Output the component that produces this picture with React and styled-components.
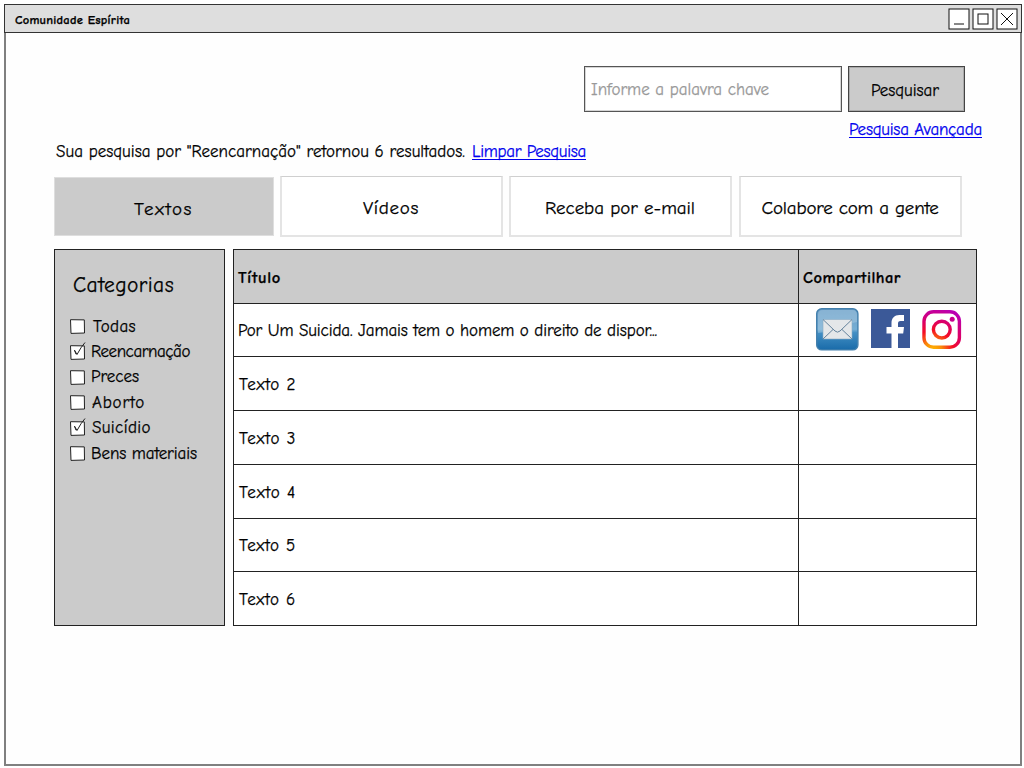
import React, { useLayoutEffect, useRef, useState } from "react";
import styled, { createGlobalStyle, css } from "styled-components";

const GlobalStyle = createGlobalStyle`
  * { box-sizing: border-box; }
  body {
    margin: 0;
    background: #fff;
    color: #000;
    font-family: "Comic Sans MS", "Comic Neue", Lato, "Open Sans", sans-serif;
    font-size: 17px;
    line-height: 20px;
  }
`;

const Page = styled.div`
  width: 1024px;
  height: 768px;
  padding: 4px 2px 2px 4px;
  overflow: hidden;
`;

const Window = styled.main`
  display: flex;
  flex-direction: column;
  width: 1018px;
  height: 762px;
  border: 2px solid #808080;
  border-top: 0;
  background: #fefefe;
`;

const TitleBar = styled.header`
  display: flex;
  justify-content: space-between;
  height: 29px;
  flex: none;
  margin: 0 -2px;
  padding: 3px 3px 0 10px;
  border: 1px solid #333;
  background: #dedede;
`;

const WindowTitle = styled.div`
  font-size: 12.5px;
  font-weight: 700;
  line-height: 24px;
`;

const WindowButtons = styled.div`
  display: flex;
  gap: 2px;
  svg { display: block; }
`;

const Content = styled.div`
  display: flex;
  flex-direction: column;
  padding: 33px 0 0 48px;
`;

const SearchRow = styled.form`
  display: flex;
  gap: 6px;
  height: 46px;
  padding-left: 530px;
`;

const SearchField = styled.div`
  width: 258px;
  height: 46px;
  padding-left: 6px;
  border: 1px solid #555;
  box-shadow: inset 0 0 0 1px #d5d5d5;
  background: #fff;
  color: #999;
  line-height: 46px;
`;

const SearchButton = styled.button`
  width: 117px;
  height: 46px;
  padding: 3px 3px 0 0;
  border: 1px solid #444;
  box-shadow: inset 0 0 0 1px #aaa;
  background: #cbcbcb;
  color: #000;
  font: inherit;
`;

const Link = styled.a`
  display: block;
  height: 18px;
  border-bottom: 1px solid #0000ee;
  color: #0000ee;
`;

const AdvancedRow = styled.div`
  display: flex;
  height: 29px;
  padding: 8px 0 0 795px;
`;

const ResultRow = styled.div`
  display: flex;
  gap: 7px;
  height: 20px;
  margin-top: 1px;
  padding-left: 2px;
`;

const Tabs = styled.nav`
  display: flex;
  gap: 6px;
  height: 61px;
  margin-top: 14px;
`;

const Tab = styled.div`
  display: flex;
  align-items: center;
  justify-content: center;
  width: ${(p) => (p.$active ? 220 : 223)}px;
  height: 61px;
  margin-left: ${(p) => p.$shift || 0}px;
  padding-top: 4px;
  padding-right: 1px;
  border: 2px solid #e4e4e4;
  border-top: 1px solid #cfcfcf;
  background: #fff;
  font-size: 19px;
  ${(p) =>
    p.$active &&
    css`
      height: 59px;
      margin-top: 1px;
      border: 1px solid #dedede;
      background: #cbcbcb;
    `}
`;

const Body = styled.div`
  display: flex;
  gap: 8px;
  margin-top: 12px;
`;

const Sidebar = styled.aside`
  width: 171px;
  height: 377px;
  padding: 23px 0 0 15px;
  border: 1px solid #222;
  background: #cbcbcb;
`;

const SidebarTitle = styled.h2`
  margin: 0 0 17px 3px;
  font-size: 21.5px;
  font-weight: 400;
  line-height: 24px;
`;

const CheckRow = styled.label`
  display: flex;
  align-items: center;
  gap: ${(p) => p.$gap}px;
  height: 25.4px;
  svg { display: block; overflow: visible; }
`;

const Table = styled.section`
  display: grid;
  grid-template-rows: 54px 53px 54px 54px 54px 53px 54px;
  width: 744px;
  height: 377px;
  border: 1px solid #222;
  border-bottom: 0;
  background: #fff;
`;

const TableRow = styled.div`
  display: grid;
  grid-template-columns: 564px 1fr;
  border-bottom: 1px solid #222;
  ${(p) =>
    p.$head &&
    css`
      background: #cbcbcb;
      font-size: 16.5px;
      font-weight: 700;
    `}
`;

const Cell = styled.div`
  display: flex;
  align-items: center;
  padding: 2px 0 0 ${(p) => p.$inset || 4}px;
  & + & { border-left: 1px solid #222; }
`;

const ShareCell = styled(Cell)`
  align-items: flex-start;
  gap: 12px;
  padding: 4px 0 0 17px;
  border-left: 1px solid #222;
  svg { display: block; flex: none; }
`;

const Run = styled.span`
  display: inline-block;
  white-space: pre;
  -webkit-text-stroke: 0.25px currentColor;
`;

// Spreads the letters so that a label takes the given width in any font.
function Fit({ width, children }) {
  const ref = useRef(null);
  const [spacing, setSpacing] = useState(0);
  useLayoutEffect(() => {
    const el = ref.current;
    el.style.letterSpacing = "0px";
    const next = (width - el.getBoundingClientRect().width) / children.length;
    el.style.letterSpacing = `${next}px`;
    setSpacing(next);
  }, [width, children]);
  return (
    <Run ref={ref} style={{ letterSpacing: `${spacing}px` }}>
      {children}
    </Run>
  );
}

function WindowButton({ children }) {
  return (
    <svg width="22" height="22" fill="none" stroke="#111">
      <rect x="1" y="1" width="20" height="20" fill="#fff" />
      {children}
    </svg>
  );
}

function Checkbox({ checked }) {
  return (
    <svg width="15" height="15" fill="none" stroke="#222">
      <path d="M.5 .7 14.3 .9 14.5 14 1 14.4Z" fill="#fff" />
      {checked && <path d="M4.5 5.2 7 9.5Q11 2 15-2.5M4.5 5.2 6 9.2" />}
    </svg>
  );
}

function MailIcon() {
  return (
    <svg width="43" height="43" viewBox="0 0 43 43">
      <defs>
        <linearGradient id="mail" x1="0" y1="0" x2="0" y2="1">
          <stop offset="0" stopColor="#6a9dc6" />
          <stop offset=".5" stopColor="#75aed4" />
          <stop offset=".58" stopColor="#438fc4" />
          <stop offset="1" stopColor="#196ba9" />
        </linearGradient>
      </defs>
      <rect x=".7" y=".7" width="41.2" height="41.2" rx="5" fill="url(#mail)" stroke="#4480ad" strokeWidth="1.4" />
      <path d="M2 7Q2 2 7 2H36Q41 2 41 7V14Q30 16 22 20T2 25Z" fill="#b5d2e5" opacity=".4" />
      <path d="M7 11.5H36V31H7Z" fill="#e4e7e9" stroke="#8babc4" strokeWidth=".6" />
      <path d="M7 11.5 19 23Q21.5 25.3 24 23L36 11.5M7 31 17 21.5M36 31 26 21.5" fill="none" stroke="#64839c" />
    </svg>
  );
}

const FacebookSvg = styled.svg`
  margin-top: 1px;
`;

const InstagramSvg = styled.svg`
  margin-top: 2px;
`;

function FacebookIcon() {
  return (
    <FacebookSvg width="39" height="39" viewBox="0 0 39 39">
      <path fill="#3b5998" d="M0 0H39V39H0Z" />
      <path fill="#fff" d="M20.5 39V24.5H15.5V18H20.5V14C20.5 9 23.6 6 28.3 6H33V12H29.7C27.4 12 27 13.2 27 15V18H33L32.2 24.5H27V39Z" />
    </FacebookSvg>
  );
}

function InstagramIcon() {
  return (
    <InstagramSvg width="40" height="40" viewBox="0 0 40 40">
      <defs>
        <radialGradient id="insta" gradientUnits="userSpaceOnUse" cx="11" cy="40" r="43">
          <stop offset="0" stopColor="#ffb900" />
          <stop offset=".2" stopColor="#fa8b0a" />
          <stop offset=".46" stopColor="#f50d24" />
          <stop offset=".68" stopColor="#dc0065" />
          <stop offset="1" stopColor="#b900b4" />
        </radialGradient>
      </defs>
      <g fill="none" stroke="url(#insta)" strokeWidth="3.4">
        <rect x="2" y="1.8" width="35.4" height="35.4" rx="9.5" />
        <circle cx="19.8" cy="19.6" r="8.4" />
      </g>
      <circle cx="30.2" cy="9.2" r="2.5" fill="#c7008f" />
    </InstagramSvg>
  );
}

const categories = [
  ["Todas", false, 43, 8],
  ["Reencarnação", true, 99, 6],
  ["Preces", false, 48, 6],
  ["Aborto", false, 53, 7],
  ["Suicídio", true, 59, 7],
  ["Bens materiais", false, 106, 6],
];

export default function App() {
  return (
    <Page>
      <GlobalStyle />
      <Window>
        <TitleBar>
          <WindowTitle><Fit width={115}>Comunidade Espírita</Fit></WindowTitle>
          <WindowButtons>
            <WindowButton><path d="M6 16H16" /></WindowButton>
            <WindowButton><rect x="6" y="6" width="10" height="10" /></WindowButton>
            <WindowButton><path d="M5 5 17 17M17 5 5 17" /></WindowButton>
          </WindowButtons>
        </TitleBar>
        <Content>
          <SearchRow>
            <SearchField><Fit width={178}>Informe a palavra chave</Fit></SearchField>
            <SearchButton type="button"><Fit width={68}>Pesquisar</Fit></SearchButton>
          </SearchRow>
          <AdvancedRow>
            <Link><Fit width={133}>Pesquisa Avançada</Fit></Link>
          </AdvancedRow>
          <ResultRow>
            <Fit width={409}>{'Sua pesquisa por "Reencarnação" retornou 6 resultados.'}</Fit>
            <Link><Fit width={114}>Limpar Pesquisa</Fit></Link>
          </ResultRow>
          <Tabs>
            <Tab $active><Fit width={59}>Textos</Fit></Tab>
            <Tab><Fit width={56}>Vídeos</Fit></Tab>
            <Tab><Fit width={150}>Receba por e-mail</Fit></Tab>
            <Tab $shift={1}><Fit width={177}>Colabore com a gente</Fit></Tab>
          </Tabs>
          <Body>
            <Sidebar>
              <SidebarTitle><Fit width={101}>Categorias</Fit></SidebarTitle>
              {categories.map(([name, checked, width, gap]) => (
                <CheckRow key={name} $gap={gap}>
                  <Checkbox checked={checked} />
                  <Fit width={width}>{name}</Fit>
                </CheckRow>
              ))}
            </Sidebar>
            <Table>
              <TableRow $head>
                <Cell><Fit width={43}>Título</Fit></Cell>
                <Cell><Fit width={98}>Compartilhar</Fit></Cell>
              </TableRow>
              <TableRow>
                <Cell><Fit width={419}>Por Um Suicida. Jamais tem o homem o direito de dispor...</Fit></Cell>
                <ShareCell><MailIcon /><FacebookIcon /><InstagramIcon /></ShareCell>
              </TableRow>
              {[2, 3, 4, 5, 6].map((n) => (
                <TableRow key={n}>
                  <Cell $inset={5}><Fit width={57}>{`Texto ${n}`}</Fit></Cell>
                  <Cell />
                </TableRow>
              ))}
            </Table>
          </Body>
        </Content>
      </Window>
    </Page>
  );
}
